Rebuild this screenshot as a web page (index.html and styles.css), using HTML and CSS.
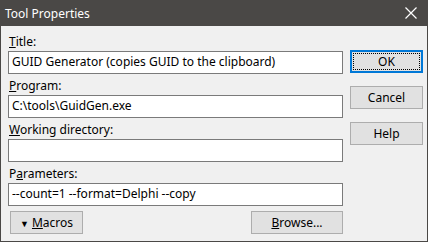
FILE: index.html
```html
<!DOCTYPE html>
<html lang="en">
<head>
    <meta charset="UTF-8">
    <title>Tool Properties</title>
    <link rel="stylesheet" href="styles.css">
</head>
<body>

<div class="window">
    <div class="titlebar">
        <span class="caption">Tool Properties</span>
        <svg class="close" width="12" height="12" viewBox="0 0 12 12">
            <path d="M0.5 0.5 L11.5 11.5 M11.5 0.5 L0.5 11.5" stroke="#fff" stroke-width="1.2" fill="none"/>
        </svg>
    </div>

    <div class="client">
        <div class="fields">
            <label class="label"><u>T</u>itle:</label>
            <div class="edit">GUID Generator (copies GUID to the clipboard)</div>

            <label class="label"><u>P</u>rogram:</label>
            <div class="edit">C:\tools\GuidGen.exe</div>

            <label class="label"><u>W</u>orking directory:</label>
            <div class="edit"></div>

            <label class="label">P<u>a</u>rameters:</label>
            <div class="edit">--count=1 --format=Delphi --copy</div>

            <div class="bottom-row">
                <button class="btn macros"><span class="arrow">&#9660;</span> <u>M</u>acros</button>
                <button class="btn browse"><u>B</u>rowse...</button>
            </div>
        </div>

        <div class="buttons">
            <button class="btn default"><span class="focus">OK</span></button>
            <button class="btn">Cancel</button>
            <button class="btn">Help</button>
        </div>
    </div>
</div>

</body>
</html>
```

FILE: styles.css
```css
body {
    margin: 0;
    font-family: "Segoe UI", "Noto Sans", sans-serif;
    font-size: 12px;
    color: #000;
    background: #f0f0f0;
}

.window {
    width: 428px;
    height: 242px;
    box-sizing: border-box;
    border: 1px solid #4a4846;
    border-top: none;
    background: #f0f0f0;
}

.titlebar {
    height: 26px;
    margin: 0 -1px;
    background: #4a4846;
    display: flex;
    align-items: center;
    justify-content: space-between;
    padding: 0 10px 0 5px;
}

.caption {
    color: white;
    font-size: 12px;
}

.close {
    display: block;
    margin-right: 1px;
}

.client {
    display: flex;
    padding: 6px 0 0 7px;
}

.fields {
    width: 335px;
    display: flex;
    flex-direction: column;
}

.label {
    display: block;
    height: 15px;
    line-height: 15px;
    margin: 2px 0 2px 1px;
}

.edit {
    height: 23px;
    box-sizing: border-box;
    border: 1px solid #7a7a7a;
    background: white;
    padding: 0 3px;
    line-height: 20px;
    margin-bottom: 2px;
    white-space: nowrap;
}

.buttons {
    display: flex;
    flex-direction: column;
    gap: 13px;
    margin-left: 7px;
    padding-top: 18px;
}

.btn {
    font-family: inherit;
    font-size: 12px;
    color: #000;
    height: 23px;
    background: #e1e1e1;
    border: 1px solid #adadad;
    padding: 0;
    box-sizing: border-box;
}

.buttons .btn {
    width: 73px;
}

.btn.default {
    border: 2px solid #0078d7;
    padding: 1px;
}

.btn.default .focus {
    display: block;
    height: 100%;
    box-sizing: border-box;
    border: 1px dotted #000;
    line-height: 15px;
}

.bottom-row {
    display: flex;
    justify-content: space-between;
    margin-top: 3px;
    padding-left: 2px;
}

.macros {
    width: 73px;
}

.arrow {
    font-size: 9px;
}

.browse {
    width: 92px;
}
```
